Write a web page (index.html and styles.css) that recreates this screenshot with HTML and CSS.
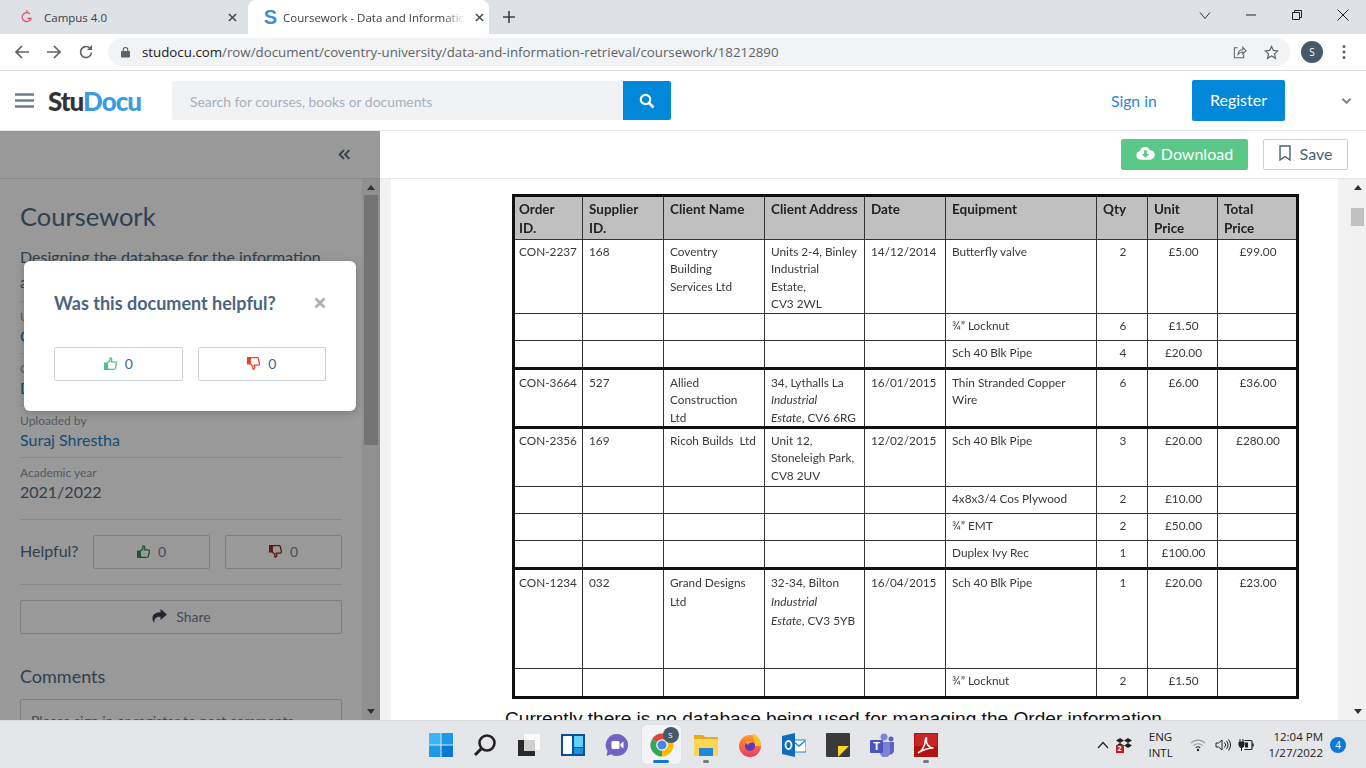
FILE: index.html
```html
<!DOCTYPE html>
<html lang="en">
<head>
    <meta charset="UTF-8">
    <title>Coursework - Data and Information Retrieval</title>
    <link rel="stylesheet" href="styles.css">
</head>
<body>
    <div class="tabstrip">
        <div class="tab">
            <svg class="favicon" viewBox="0 0 16 16"><path d="M11 5A4.500 4.500 0 1 0 12 9.500H8.500" fill="none" stroke="#e4525f" stroke-width="1.300"/><path d="M7 1l2 2.500" stroke="#e4525f" stroke-width="1.200"/></svg>
            <span class="tab-title">Campus 4.0</span>
            <svg class="tab-close" viewBox="0 0 10 10"><path d="M1 1l8 8M9 1l-8 8" stroke="#3c4043" stroke-width="1.500"/></svg>
        </div>
        <div class="tab tab-active">
            <span class="s-icon">S</span>
            <span class="tab-title tab-fade">Coursework - Data and Information Retrieval</span>
            <svg class="tab-close" viewBox="0 0 10 10"><path d="M1 1l8 8M9 1l-8 8" stroke="#3c4043" stroke-width="1.500"/></svg>
        </div>
        <svg class="new-tab" viewBox="0 0 12 12"><path d="M6 0v12M0 6h12" stroke="#3c4043" stroke-width="1.600"/></svg>
        <div class="win-controls">
            <svg viewBox="0 0 12 12"><path d="M1 3.500l5 6 5-6" fill="none" stroke="#333" stroke-width="1"/></svg>
            <svg viewBox="0 0 12 12"><path d="M1 6h10" stroke="#222" stroke-width="1"/></svg>
            <svg viewBox="0 0 12 12"><path d="M1.500 3.500h7v7h-7zM3.500 3.500v-2h7v7h-2" fill="none" stroke="#222" stroke-width="1"/></svg>
            <svg viewBox="0 0 12 12"><path d="M.5.5l11 11M11.500 .5l-11 11" stroke="#222" stroke-width="1"/></svg>
        </div>
    </div>

    <div class="toolbar">
        <svg class="nav-icon" viewBox="0 0 16 16"><path d="M15 8H2M8 2L2 8l6 6" fill="none" stroke="#5f6368" stroke-width="1.700"/></svg>
        <svg class="nav-icon" viewBox="0 0 16 16"><path d="M1 8h13M8 2l6 6-6 6" fill="none" stroke="#5f6368" stroke-width="1.700"/></svg>
        <svg class="nav-icon" viewBox="0 0 16 16"><path d="M13.500 8.500A5.500 5.500 0 1 1 11.800 4" fill="none" stroke="#5f6368" stroke-width="1.700"/><path d="M14 1v5H9z" fill="#5f6368"/></svg>
        <div class="omnibox">
            <svg class="lock" viewBox="0 0 10 12"><path d="M2.500 5V3.500a2.500 2.500 0 0 1 5 0V5" fill="none" stroke="#5f6368" stroke-width="1.300"/><rect y="5" width="10" height="7" rx="1" fill="#5f6368"/></svg>
            <span class="url"><b>studocu.com</b>/row/document/coventry-university/data-and-information-retrieval/coursework/18212890</span>
            <svg class="omni-icon" viewBox="0 0 16 16"><path d="M6 3H2.500v10.500h10V10M6.500 10c0-3.500 2-5 5-5V2.500L15 6l-3.500 3.500V7.500c-2 0-3.500.5-5 2.500z" fill="none" stroke="#5f6368" stroke-width="1.100"/></svg>
            <svg class="omni-icon" viewBox="0 0 16 16"><path d="M8 1.500l2 4.300 4.700.5-3.500 3.200 1 4.600L8 11.700l-4.200 2.400 1-4.600L1.300 6.300 6 5.800z" fill="none" stroke="#5f6368" stroke-width="1.300"/></svg>
        </div>
        <span class="avatar">S</span>
        <svg class="menu-dots" viewBox="0 0 4 16"><circle cx="2" cy="2.500" r="1.500"/><circle cx="2" cy="8" r="1.500"/><circle cx="2" cy="13.500" r="1.500"/></svg>
    </div>

    <header class="site-header">
        <svg class="hamburger" viewBox="0 0 19 15"><path d="M0 1.500h19M0 7.500h19M0 13.500h19" stroke="#6f7f8d" stroke-width="2.600"/></svg>
        <span class="logo">Stu<span class="logo-blue">Docu</span></span>
        <div class="search">
            <span class="search-input">Search for courses, books or documents</span>
            <span class="search-btn">
                <svg viewBox="0 0 16 16"><circle cx="6.500" cy="6.500" r="4.700" fill="none" stroke="#fff" stroke-width="2.200"/><path d="M10 10l4.500 4.500" stroke="#fff" stroke-width="2.600"/></svg>
            </span>
        </div>
        <a class="sign-in">Sign in</a>
        <a class="register">Register</a>
        <svg class="header-chevron" viewBox="0 0 12 8"><path d="M1.500 1.500L6 6l4.500-4.500" fill="none" stroke="#7d8b99" stroke-width="2.200"/></svg>
    </header>

    <div class="main">
        <aside class="sidebar">
            <div class="collapse-bar">
                <svg viewBox="0 0 12 10"><path d="M5.500 1L1.500 5l4 4M10.500 1l-4 4 4 4" fill="none" stroke="#5f6b78" stroke-width="1.800"/></svg>
            </div>
            <div class="side-scroll">
                <div class="side-content">
                    <h1 class="doc-title">Coursework</h1>
                    <p class="doc-desc">Designing the database for the information and order management of the company</p>
                    <div class="meta-row">
                        <div class="meta-label">University</div>
                        <div class="meta-link">Coventry University</div>
                    </div>
                    <div class="meta-row">
                        <div class="meta-label">Course</div>
                        <div class="meta-link">Data and Information Retrieval</div>
                    </div>
                    <div class="meta-row">
                        <div class="meta-label">Uploaded by</div>
                        <div class="meta-link">Suraj Shrestha</div>
                    </div>
                    <div class="meta-row meta-year">
                        <div class="meta-label">Academic year</div>
                        <div class="meta-value">2021/2022</div>
                    </div>
                    <div class="helpful-row">
                        <span class="helpful-label">Helpful?</span>
                        <span class="vote-btn">
                            <svg class="thumb" viewBox="0 0 14 14"><path d="M.7 6.500h2.800v6.800H.7zM3.500 6.800L6.300 4V1.200c1.400-.5 2.200.5 2 1.800L8 5.300h4.200c1 0 1.400.8 1.200 1.600l-1.200 5.300c-.2.700-.6 1.100-1.300 1.100H5.500l-2-.8" fill="none" stroke="#2f8a55" stroke-width="1.400"/><path d="M.7 6.500h2.800v6.800H.7z" fill="#2f8a55"/></svg>
                            0
                        </span>
                        <span class="vote-btn">
                            <svg class="thumb" viewBox="0 0 14 14"><path d="M.7 7.500h2.800V.7H.7zM3.500 7.200L6.300 10v2.800c1.400.5 2.200-.5 2-1.800L8 8.700h4.200c1 0 1.400-.8 1.200-1.600L12.200 1.800C12 1.100 11.600.7 10.900.7H5.500l-2 .8" fill="none" stroke="#96281b" stroke-width="1.400"/><path d="M.7 7.500h2.800V.7H.7z" fill="#96281b"/></svg>
                            0
                        </span>
                    </div>
                    <div class="share-wrap">
                        <span class="share-btn">
                            <svg viewBox="0 0 16 14"><path d="M9.500 0L16 5.500 9.500 11V7.800C5 7.800 3 9.500 3.500 14 0 10.500.3 3.500 9.500 3.300z" fill="#34404e"/></svg>
                            Share
                        </span>
                    </div>
                    <h2 class="comments-title">Comments</h2>
                    <div class="comment-box">Please sign in or register to post comments.</div>
                </div>
                <div class="side-scrollbar">
                    <span class="arrow-up"></span>
                    <span class="side-thumb"></span>
                    <span class="arrow-down"></span>
                </div>
            </div>
            <div class="dim"></div>
            <div class="modal">
                <div class="modal-head">
                    <span class="modal-title">Was this document helpful?</span>
                    <svg class="modal-close" viewBox="0 0 12 12"><path d="M1.500 1.500l9 9M10.500 1.500l-9 9" stroke="#a7b1bd" stroke-width="2.800"/></svg>
                </div>
                <div class="modal-votes">
                    <span class="modal-vote">
                        <svg class="thumb" viewBox="0 0 14 14"><path d="M.7 6.500h2.800v6.800H.7zM3.500 6.800L6.300 4V1.200c1.400-.5 2.200.5 2 1.800L8 5.300h4.200c1 0 1.400.8 1.200 1.600l-1.200 5.300c-.2.700-.6 1.100-1.300 1.100H5.500l-2-.8" fill="none" stroke="#4fc27f" stroke-width="1.400"/><path d="M.7 6.500h2.800v6.800H.7z" fill="#4fc27f"/></svg>
                        0
                    </span>
                    <span class="modal-vote">
                        <svg class="thumb" viewBox="0 0 14 14"><path d="M.7 7.500h2.800V.7H.7zM3.500 7.200L6.300 10v2.800c1.400.5 2.200-.5 2-1.800L8 8.700h4.200c1 0 1.400-.8 1.200-1.600L12.200 1.800C12 1.100 11.600.7 10.900.7H5.500l-2 .8" fill="none" stroke="#e5432f" stroke-width="1.400"/><path d="M.7 7.500h2.800V.7H.7z" fill="#e5432f"/></svg>
                        0
                    </span>
                </div>
            </div>
        </aside>

        <section class="viewer">
            <div class="doc-actions">
                <a class="download">
                    <svg viewBox="0 0 20 14"><path d="M5 14a4.500 4.500 0 0 1-1-8.900A5.500 5.500 0 0 1 14.500 4 5 5 0 0 1 15 14z" fill="#fff"/><path d="M8.500 4h3v4h2.500L10 12 6 8h2.500z" fill="#5cc888"/></svg>
                    Download
                </a>
                <a class="save">
                    <svg viewBox="0 0 12 16"><path d="M1 1h10v14l-5-3.500L1 15z" fill="none" stroke="#4a6078" stroke-width="1.400"/></svg>
                    Save
                </a>
            </div>
            <div class="doc-area">
                <div class="page">
                    <table class="orders">
                        <colgroup>
                            <col class="c1"><col class="c2"><col class="c3"><col class="c4"><col class="c5"><col class="c6"><col class="c7"><col class="c8"><col class="c9">
                        </colgroup>
                        <tr class="h44 head">
                            <td>Order<br>ID.</td><td>Supplier<br>ID.</td><td>Client Name</td><td>Client Address</td><td>Date</td><td>Equipment</td><td>Qty</td><td>Unit<br>Price</td><td>Total<br>Price</td>
                        </tr>
                        <tr class="h74">
                            <td>CON-2237</td><td>168</td><td>Coventry<br>Building<br>Services Ltd</td><td>Units 2-4, Binley<br>Industrial<br>Estate,<br>CV3 2WL</td><td>14/12/2014</td><td>Butterfly valve</td><td class="mid">2</td><td class="mid">£5.00</td><td class="mid">£99.00</td>
                        </tr>
                        <tr class="h27 single">
                            <td></td><td></td><td></td><td></td><td></td><td>¾” Locknut</td><td class="mid">6</td><td class="mid">£1.50</td><td></td>
                        </tr>
                        <tr class="h28 end single">
                            <td></td><td></td><td></td><td></td><td></td><td>Sch 40 Blk Pipe</td><td class="mid">4</td><td class="mid">£20.00</td><td></td>
                        </tr>
                        <tr class="h59 end">
                            <td>CON-3664</td><td>527</td><td>Allied<br>Construction<br>Ltd</td><td>34, Lythalls La<br><i>Industrial<br>Estate</i>, CV6 6RG</td><td>16/01/2015</td><td>Thin Stranded Copper<br>Wire</td><td class="mid">6</td><td class="mid">£6.00</td><td class="mid">£36.00</td>
                        </tr>
                        <tr class="h59">
                            <td>CON-2356</td><td>169</td><td>Ricoh Builds&nbsp; Ltd</td><td>Unit 12,<br>Stoneleigh Park,<br>CV8 2UV</td><td>12/02/2015</td><td>Sch 40 Blk Pipe</td><td class="mid">3</td><td class="mid">£20.00</td><td class="mid">£280.00</td>
                        </tr>
                        <tr class="h27 single">
                            <td></td><td></td><td></td><td></td><td></td><td>4x8x3/4 Cos Plywood</td><td class="mid">2</td><td class="mid">£10.00</td><td></td>
                        </tr>
                        <tr class="h27 single">
                            <td></td><td></td><td></td><td></td><td></td><td>¾” EMT</td><td class="mid">2</td><td class="mid">£50.00</td><td></td>
                        </tr>
                        <tr class="h28 end single">
                            <td></td><td></td><td></td><td></td><td></td><td>Duplex Ivy Rec</td><td class="mid">1</td><td class="mid">£100.00</td><td></td>
                        </tr>
                        <tr class="h100">
                            <td>CON-1234</td><td>032</td><td>Grand Designs<br>Ltd</td><td>32-34, Bilton<br><i>Industrial<br>Estate</i>, CV3 5YB</td><td>16/04/2015</td><td>Sch 40 Blk Pipe</td><td class="mid">1</td><td class="mid">£20.00</td><td class="mid">£23.00</td>
                        </tr>
                        <tr class="h29 single">
                            <td></td><td></td><td></td><td></td><td></td><td>¾” Locknut</td><td class="mid">2</td><td class="mid">£1.50</td><td></td>
                        </tr>
                    </table>
                    <p class="page-text">Currently there is no database being used for managing the Order information.</p>
                </div>
                <div class="doc-scrollbar">
                    <span class="arrow-up dark"></span>
                    <span class="doc-thumb"></span>
                    <span class="arrow-down dark"></span>
                </div>
            </div>
        </section>
    </div>

    <footer class="taskbar">
        <div class="task-icons">
            <span class="task-slot"><svg viewBox="0 0 24 24"><path d="M0 0h11.500v11.500H0z" fill="#38b6f5"/><path d="M12.500 0H24v11.500H12.500z" fill="#1a9be8"/><path d="M0 12.500h11.500V24H0z" fill="#1a9be8"/><path d="M12.500 12.500H24V24H12.500z" fill="#0a78d6"/></svg></span>
            <span class="task-slot"><svg viewBox="0 0 24 24"><circle cx="14" cy="10" r="7.500" fill="none" stroke="#222" stroke-width="2.600"/><path d="M8.500 15.500L2 22" stroke="#222" stroke-width="3"/></svg></span>
            <span class="task-slot"><svg viewBox="0 0 24 24"><path d="M7 1h16v16H7z" fill="#fafafa"/><path d="M1 7h17v16H1z" fill="#2a2a2a"/><path d="M7 7h11v11H7z" fill="#cfcfcf"/></svg></span>
            <span class="task-slot"><svg viewBox="0 0 24 24"><path d="M0 1h24v22H0z" fill="#0b4f96"/><rect x="2" y="3" width="9" height="18" rx="1" fill="#fff"/><path d="M13 3h9v11h-9z" fill="#62d0fb"/><path d="M13 15h9v6h-9z" fill="#1b92e0"/></svg></span>
            <span class="task-slot"><svg viewBox="0 0 24 24"><path d="M12 1a11 11 0 1 1-6 20.200L1.500 23l1-5A11 11 0 0 1 12 1z" fill="#6f63c4"/><rect x="6.500" y="8" width="8" height="8" rx="1.500" fill="#fff"/><path d="M15.500 11l3-2.500v7l-3-2.500z" fill="#fff"/></svg></span>
            <span class="task-slot task-active">
                <svg viewBox="0 0 24 24"><path d="M12 12L22 6.250A11.500 11.500 0 0 0 2 6.250z" fill="#e0453a"/><path d="M12 12L22 6.250A11.500 11.500 0 0 1 12 23.500z" fill="#fbbc04"/><path d="M12 12V23.500A11.500 11.500 0 0 1 2 6.250z" fill="#34a853"/><circle cx="12" cy="12" r="5.800" fill="#fff"/><circle cx="12" cy="12" r="4.600" fill="#4a85ee"/></svg>
                <span class="task-badge">S</span>
                <span class="task-bar-on"></span>
            </span>
            <span class="task-slot task-open"><svg viewBox="0 0 24 24"><path d="M0 2h9l2 2h13v19H0z" fill="#e8a91c"/><path d="M0 6h24v17H0z" fill="#fcd654"/><path d="M5 15h14v8H5z" fill="#1d8ad6"/></svg></span>
            <span class="task-slot"><svg viewBox="0 0 24 24"><defs><linearGradient id="fox" x1="0" y1="0" x2="0" y2="1"><stop offset="0" stop-color="#ff9a2e"/><stop offset="1" stop-color="#f0385c"/></linearGradient></defs><circle cx="12" cy="13" r="11" fill="url(#fox)"/><path d="M15 0c5 3 8 7 8 13h-6c0-5-3-9-2-13z" fill="#ffc227"/><circle cx="12" cy="13" r="5" fill="#5b3bb5"/><path d="M7 9c3-2 7-2 9 1-3-1-5 0-6 2z" fill="#ff9a2e"/></svg></span>
            <span class="task-slot"><svg viewBox="0 0 24 24"><path d="M10 7h14v12H10z" fill="#fff" stroke="#1a86d4"/><path d="M11 8l6 5 6-5" fill="none" stroke="#1a86d4" stroke-width="1.400"/><path d="M0 3l13-3v24L0 21z" fill="#0f6cbd"/><ellipse cx="6.500" cy="12" rx="3" ry="4" fill="none" stroke="#fff" stroke-width="1.800"/></svg></span>
            <span class="task-slot"><svg viewBox="0 0 24 24"><rect width="24" height="24" rx="1" fill="#3a3a3a"/><path d="M12 13h11L12 24z" fill="#fbd51e"/></svg></span>
            <span class="task-slot"><svg viewBox="0 0 24 24"><circle cx="14" cy="4" r="3.500" fill="#7b83d6"/><circle cx="21" cy="6" r="2.500" fill="#5b62b8"/><path d="M16 9h8v9a4 4 0 0 1-6 3z" fill="#5b62b8"/><path d="M8 9h12v10a5 5 0 0 1-10 1z" fill="#7b83d6"/><rect y="7" width="13" height="13" rx="1" fill="#4b53bc"/><text x="6.500" y="17" font-family="Liberation Sans" font-size="11" font-weight="700" fill="#fff" text-anchor="middle">T</text></svg></span>
            <span class="task-slot task-open"><svg viewBox="0 0 24 24"><rect width="24" height="24" fill="#b3120f"/><rect x="1" y="1" width="22" height="12" fill="#d8322e" opacity=".6"/><path d="M4 20c4-2 7-7 7.500-14 .2-2 1.500-1.500 1 0-1 4 2 9 7 9-5 0-11 2-15.500 5z" fill="none" stroke="#fff" stroke-width="1.500"/></svg></span>
        </div>
        <div class="tray">
            <svg class="tray-chevron" viewBox="0 0 12 8"><path d="M1 7l5-5.500L11 7" fill="none" stroke="#222" stroke-width="1.200"/></svg>
            <span class="dropbox">
                <svg viewBox="0 0 16 12"><path d="M4 0l4 2.500L4 5 0 2.500zM12 0l4 2.500L12 5 8 2.500zM4 5l4 2.500L4 10 0 7.500zM12 5l4 2.500L12 10 8 7.500z" fill="#222"/></svg>
                <span class="dropbox-badge">2</span>
            </span>
            <span class="lang">ENG<br>INTL</span>
            <svg class="tray-icon" viewBox="0 0 16 14"><path d="M1 5a10 10 0 0 1 14 0M3.500 7.500a6.500 6.500 0 0 1 9 0" fill="none" stroke="#999" stroke-width="1.100"/><path d="M5.800 9.800a3.200 3.200 0 0 1 4.400 0" fill="none" stroke="#222" stroke-width="1.100"/><circle cx="8" cy="12" r="1.200" fill="#222"/></svg>
            <svg class="tray-icon" viewBox="0 0 16 14"><path d="M1 5h2.500L7 2v10L3.500 9H1z" fill="none" stroke="#222"/><path d="M9.500 4.500a3.500 3.500 0 0 1 0 5M11.500 3a6 6 0 0 1 0 8M13.500 1.500a8.500 8.500 0 0 1 0 11" fill="none" stroke="#222"/></svg>
            <svg class="tray-icon tray-battery" viewBox="0 0 16 14"><path d="M6.500 2.500h6.500a1 1 0 0 1 1 1v7a1 1 0 0 1-1 1H6.500" fill="none" stroke="#222" stroke-width="1.200"/><path d="M15 5.500v3" stroke="#222" stroke-width="1.500"/><path d="M2 1v3M5 1v3M1 4h5v3a2 2 0 0 1-5 0zM3.500 9v4" fill="#222" stroke="#222"/><path d="M7 4.500h3v5H7z" fill="#222"/></svg>
            <span class="clock"><span>12:04 PM</span><span>1/27/2022</span></span>
            <span class="notif">4</span>
        </div>
    </footer>
</body>
</html>
```

FILE: styles.css
```css
html, body {
    height: 100%;
    margin: 0;
    overflow: hidden;
}
body {
    display: flex;
    flex-direction: column;
    width: 1366px;
    height: 768px;
    font-family: "Lato", sans-serif;
    background: #fff;
    color: #4a6078;
}
svg {
    display: block;
    flex: none;
}

/* browser tabs */
.tabstrip {
    display: flex;
    align-items: flex-end;
    height: 34px;
    background: #dee1e6;
    font-family: "Open Sans", sans-serif;
    font-size: 11.500px;
    color: #3c4043;
    flex: none;
}
.tab {
    display: flex;
    align-items: center;
    width: 248px;
    height: 34px;
    box-sizing: border-box;
    padding-left: 19px;
}
.tab-active {
    width: 241px;
    padding-left: 10px;
    background: #fff;
    border-radius: 8px 8px 0 0;
}
.tab-active .tab-close {
    margin: 0 5px 0 6px;
}
.favicon {
    width: 16px;
    height: 16px;
    margin-right: 9px;
}
.s-icon {
    width: 25px;
    color: #3f8fd6;
    font-family: "Liberation Sans", sans-serif;
    font-weight: 700;
    font-size: 20px;
    line-height: 1;
    text-align: center;
}
.tab-title {
    flex: 1;
    white-space: nowrap;
    overflow: hidden;
}
.tab-fade {
    -webkit-mask-image: linear-gradient(to right, #000 86%, transparent 98%);
    mask-image: linear-gradient(to right, #000 86%, transparent 98%);
}
.tab-close {
    width: 9px;
    height: 9px;
    margin: 0 11px 0 10px;
}
.new-tab {
    width: 12px;
    height: 12px;
    margin: 0 0 11px 14px;
}
.win-controls {
    display: flex;
    margin-left: auto;
    margin-right: 17px;
    margin-bottom: 13px;
    gap: 34px;
}
.win-controls svg {
    width: 12px;
    height: 12px;
}

/* address bar */
.toolbar {
    display: flex;
    align-items: center;
    height: 36px;
    border-bottom: 1px solid #dadce0;
    padding-left: 14px;
    flex: none;
}
.nav-icon {
    width: 16px;
    height: 16px;
    margin-right: 16px;
}
.nav-icon:nth-child(3) {
    margin-right: 14px;
}
.omnibox {
    display: flex;
    align-items: center;
    width: 1182px;
    height: 28px;
    box-sizing: border-box;
    padding: 0 11px 0 13px;
    background: #f1f3f4;
    border-radius: 14px;
}
.lock {
    width: 9px;
    height: 12px;
    margin-right: 12px;
}
.url {
    flex: 1;
    font-family: "Open Sans", sans-serif;
    font-size: 13.300px;
    color: #5f6368;
    white-space: nowrap;
}
.url b {
    font-weight: 400;
    color: #202124;
}
.omni-icon {
    width: 15px;
    height: 15px;
    margin-left: 17px;
}
.avatar {
    width: 22px;
    height: 22px;
    margin-left: 11px;
    border-radius: 50%;
    background: #455a68;
    color: #fff;
    font-family: "Open Sans", sans-serif;
    font-size: 10px;
    line-height: 22px;
    text-align: center;
}
.menu-dots {
    width: 4px;
    height: 16px;
    margin-left: 19px;
    fill: #5f6368;
}

/* studocu header */
.site-header {
    display: flex;
    align-items: center;
    height: 59px;
    border-bottom: 1px solid #e6e6e6;
    padding-left: 15px;
    flex: none;
}
.hamburger {
    width: 19px;
    height: 15px;
}
.logo {
    width: 94px;
    margin-left: 14px;
    font-weight: 900;
    font-size: 26px;
    letter-spacing: -1px;
    color: #333;
    flex: none;
}
.logo-blue {
    color: #3d9be0;
}
.search {
    display: flex;
    width: 499px;
    height: 39px;
    margin-left: 30px;
    background: #f0f2f4;
    border-radius: 2px;
}
.search-input {
    flex: 1;
    padding-left: 18px;
    font-size: 13.900px;
    line-height: 41px;
    color: #a9b0ba;
}
.search-btn {
    display: flex;
    align-items: center;
    justify-content: center;
    width: 48px;
    background: #0288d9;
    border-radius: 0 2px 2px 0;
}
.search-btn svg {
    width: 16px;
    height: 16px;
}
.sign-in {
    width: 45px;
    margin-left: 440px;
    font-size: 15.700px;
    color: #1f88d9;
    white-space: nowrap;
}
.register {
    width: 93px;
    height: 41px;
    margin-left: 36px;
    background: #0288d9;
    color: #fff;
    border-radius: 2px;
    font-size: 16px;
    line-height: 40px;
    text-align: center;
}
.header-chevron {
    width: 11px;
    height: 8px;
    margin-left: 56px;
}

/* page body */
.main {
    display: flex;
    flex: 1;
    min-height: 0;
}
.sidebar {
    position: relative;
    width: 380px;
    display: flex;
    flex-direction: column;
    flex: none;
    overflow: hidden;
    background: #fff;
}
.collapse-bar {
    display: flex;
    align-items: center;
    justify-content: flex-end;
    height: 47px;
    padding-right: 29px;
    border-bottom: 1px solid #e2e4e6;
    flex: none;
}
.collapse-bar svg {
    width: 13px;
    height: 11px;
}
.side-scroll {
    display: flex;
    flex: 1;
    min-height: 0;
}
.side-content {
    flex: 1;
    padding: 0 20px;
    overflow: hidden;
}
.doc-title {
    margin: 21px 0 0;
    font-size: 25.500px;
    line-height: 32px;
    font-weight: 400;
    color: #526a83;
}
.doc-desc {
    margin: 12px 0 7px;
    font-size: 16px;
    line-height: 25px;
    height: 50px;
    color: #526a83;
}
.meta-row {
    height: 52px;
    box-sizing: border-box;
    border-top: 1px solid #e0e3e6;
    padding-top: 7px;
}
.meta-year {
    height: 62px;
}
.meta-label {
    font-size: 12px;
    line-height: 16px;
    color: #8c96a2;
}
.meta-link {
    font-size: 16px;
    line-height: 22px;
    color: #1f7fc4;
}
.meta-value {
    font-size: 16px;
    line-height: 22px;
    color: #526a83;
}
.helpful-row {
    display: flex;
    align-items: center;
    height: 66px;
    box-sizing: border-box;
    border-top: 1px solid #e0e3e6;
    border-bottom: 1px solid #e0e3e6;
}
.helpful-label {
    width: 73px;
    padding-bottom: 3px;
    font-size: 16px;
    color: #526a83;
}
.vote-btn, .share-btn, .modal-vote {
    display: flex;
    align-items: center;
    justify-content: center;
    gap: 8px;
    height: 34px;
    box-sizing: border-box;
    padding-bottom: 2px;
    border: 1px solid #ccd1d7;
    border-radius: 2px;
    font-size: 14px;
    color: #6f8193;
}
.vote-btn {
    width: 117px;
}
.vote-btn + .vote-btn {
    margin-left: 15px;
}
.thumb {
    width: 13px;
    height: 13px;
}
.share-wrap {
    padding-top: 15px;
}
.share-btn {
    width: 322px;
    gap: 9px;
}
.share-btn svg {
    width: 16px;
    height: 14px;
}
.comments-title {
    margin: 30px 0 11px;
    font-size: 18px;
    line-height: 24px;
    font-weight: 400;
    color: #526a83;
}
.comment-box {
    height: 60px;
    padding: 12px 10px;
    border: 1px solid #ccd1d7;
    border-radius: 2px;
    font-size: 14px;
    color: #6f8193;
}
.side-scrollbar {
    display: flex;
    flex-direction: column;
    align-items: center;
    width: 18px;
    background: #f1f1f1;
    flex: none;
}
.side-thumb {
    width: 14px;
    height: 250px;
    margin-top: 5px;
    background: #c1c1c1;
}
.arrow-up, .arrow-down {
    width: 0;
    height: 0;
    border-left: 4px solid transparent;
    border-right: 4px solid transparent;
    margin-top: 6px;
}
.arrow-up {
    border-bottom: 5px solid #505050;
}
.arrow-down {
    border-top: 5px solid #505050;
    margin-top: auto;
    margin-bottom: 6px;
}
.dim {
    position: absolute;
    inset: 0;
    background: rgba(0, 0, 0, 0.4);
}
.modal {
    position: absolute;
    left: 24px;
    top: 130px;
    width: 332px;
    height: 150px;
    box-sizing: border-box;
    padding: 29px 30px 0;
    background: #fff;
    border-radius: 6px;
    box-shadow: 0 2px 10px rgba(0, 0, 0, 0.2);
}
.modal-head {
    display: flex;
    align-items: center;
    justify-content: space-between;
    height: 25px;
}
.modal-title {
    font-size: 18px;
    font-weight: 700;
    color: #4a6580;
}
.modal-close {
    width: 12px;
    height: 12px;
}
.modal-votes {
    display: flex;
    gap: 15px;
    margin-top: 32px;
}
.modal-vote {
    width: 129px;
    flex: 1;
    color: #4a6580;
}

/* document viewer */
.viewer {
    flex: 1;
    display: flex;
    flex-direction: column;
    min-width: 0;
}
.doc-actions {
    display: flex;
    align-items: center;
    justify-content: flex-end;
    gap: 15px;
    height: 47px;
    padding-right: 18px;
    border-bottom: 1px solid #e6e6e6;
    flex: none;
}
.download, .save {
    display: flex;
    align-items: center;
    justify-content: center;
    height: 31px;
    box-sizing: border-box;
    border-radius: 2px;
    font-size: 16px;
    padding-bottom: 3px;
}
.download {
    width: 127px;
    gap: 6px;
    background: #5cc888;
    color: #fff;
}
.download svg {
    width: 19px;
    height: 14px;
}
.save {
    width: 85px;
    gap: 9px;
    border: 1px solid #ccd1d7;
    color: #4a6078;
}
.save svg {
    width: 12px;
    height: 16px;
}
.doc-area {
    flex: 1;
    min-height: 0;
    display: flex;
    background: #f0f2f4;
}
.page {
    width: 947px;
    margin-left: 11px;
    background: #fff;
    overflow: hidden;
    box-sizing: border-box;
    padding: 15px 0 0 121px;
}

/* the table is a scanned picture in the document, so it stays slightly soft */
.orders {
    table-layout: fixed;
    width: 785px;
    border-collapse: collapse;
    border: 3px solid #111;
    font-size: 11.800px;
    line-height: 17.300px;
    color: #3a3a3a;
    filter: blur(0.3px);
}
.orders td {
    padding: 3px 4px 0 6px;
    border: 1px solid #333;
    vertical-align: top;
    white-space: nowrap;
    overflow: hidden;
}
.orders td:first-child {
    padding-left: 4px;
}
.orders .mid {
    text-align: center;
}
.orders .head td {
    padding-top: 3px;
    background: #c0c0c0;
    font-weight: 700;
    font-size: 13.500px;
    line-height: 19px;
    color: #222;
}
.orders .end td {
    padding-top: 4px;
    border-bottom: 3px solid #111;
}
.orders .single td {
    padding-top: 3px;
}
.orders .h100 td {
    padding-top: 4px;
    line-height: 18.800px;
}
.c1 { width: 69px; }
.c2 { width: 81px; }
.c3 { width: 101px; }
.c4 { width: 100px; }
.c5 { width: 81px; }
.c6 { width: 151px; }
.c7 { width: 51px; }
.c8 { width: 70px; }
.c9 { width: 80px; }
.h27 { height: 27px; }
.h28 { height: 28px; }
.h29 { height: 29px; }
.h44 { height: 44px; }
.h59 { height: 59px; }
.h74 { height: 74px; }
.h100 { height: 100px; }
.page-text {
    margin: 9px 0 0 -7px;
    font-family: "Liberation Sans", sans-serif;
    font-size: 19.100px;
    line-height: 22px;
    color: #111;
    white-space: nowrap;
}
.doc-scrollbar {
    display: flex;
    flex-direction: column;
    align-items: center;
    margin-left: 11px;
    width: 17px;
    background: #f1f1f1;
}
.doc-thumb {
    width: 13px;
    height: 18px;
    margin-top: 18px;
    background: #c1c1c1;
}
.arrow-up.dark, .arrow-down.dark {
    border-bottom-color: #333;
    border-top-color: #333;
}

/* windows taskbar */
.taskbar {
    display: flex;
    align-items: center;
    height: 48px;
    background: #e4e6ea;
    border-top: 1px solid #d8dade;
    box-sizing: border-box;
    flex: none;
}
.task-icons {
    display: flex;
    align-self: flex-start;
    margin-top: 4px;
    padding-left: 419px;
}
.task-slot {
    position: relative;
    display: flex;
    align-items: center;
    justify-content: center;
    width: 38.100px;
    height: 39px;
    margin: 0 3px;
    border-radius: 4px;
}
.task-slot svg {
    width: 24px;
    height: 24px;
}
.task-active {
    background: #f3f4f6;
    box-shadow: 0 0 1px rgba(0, 0, 0, 0.25);
}
.task-badge {
    position: absolute;
    top: 2px;
    right: 2px;
    width: 16px;
    height: 16px;
    border-radius: 50%;
    background: #455a68;
    color: #fff;
    font-family: "Open Sans", sans-serif;
    font-size: 8px;
    line-height: 16px;
    text-align: center;
}
.task-bar-on {
    position: absolute;
    bottom: 1px;
    left: 11px;
    width: 16px;
    height: 3px;
    border-radius: 2px;
    background: #0a78d6;
}
.task-open::after {
    content: "";
    position: absolute;
    bottom: 1px;
    left: 50%;
    width: 6px;
    height: 3px;
    margin-left: -3px;
    border-radius: 2px;
    background: #77797d;
}
.tray {
    display: flex;
    align-items: center;
    margin-left: auto;
    font-family: "Open Sans", sans-serif;
    font-size: 11.500px;
    color: #222;
}
.tray-chevron {
    width: 12px;
    height: 8px;
    margin-right: 7px;
}
.dropbox {
    position: relative;
    width: 16px;
    height: 14px;
}
.dropbox svg {
    width: 16px;
    height: 12px;
}
.dropbox-badge {
    position: absolute;
    left: 0;
    bottom: -1px;
    width: 8px;
    height: 8px;
    background: #d3132a;
    color: #fff;
    font-size: 7px;
    font-weight: 700;
    line-height: 8px;
    text-align: center;
}
.lang {
    width: 40px;
    margin-left: 9px;
    line-height: 16px;
    text-align: center;
}
.tray-icon {
    width: 16px;
    height: 14px;
    margin-left: 9px;
}
.tray-battery {
    margin-left: 7px;
}
.clock {
    display: flex;
    flex-direction: column;
    align-items: flex-end;
    margin-left: 15px;
    line-height: 16px;
}
.notif {
    width: 16px;
    height: 16px;
    margin: 0 20px 0 7px;
    border-radius: 50%;
    background: #0a78d6;
    color: #fff;
    font-size: 10px;
    line-height: 16px;
    text-align: center;
}
```
